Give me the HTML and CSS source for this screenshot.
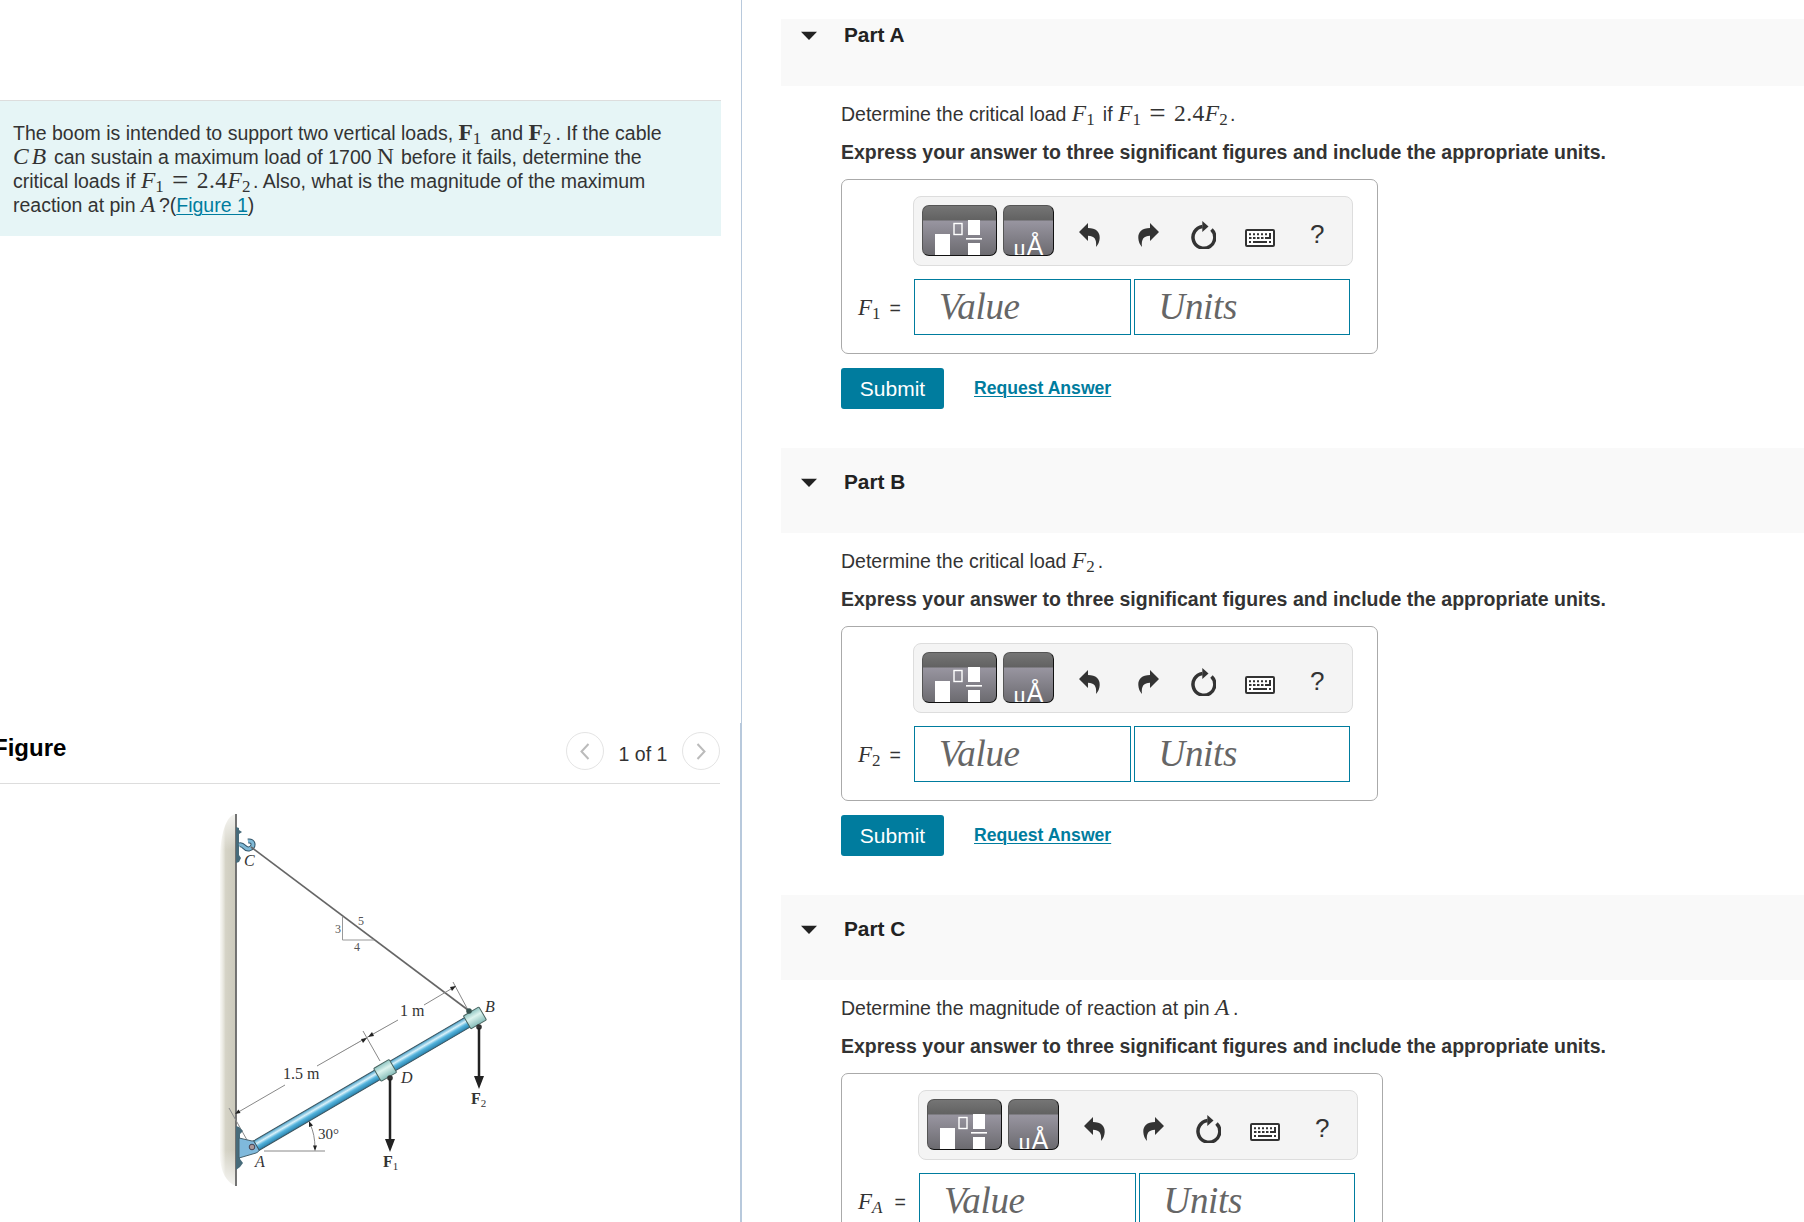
FILE: index.html
```html
<!DOCTYPE html>
<html lang="en">
<head>
    <meta charset="UTF-8">
    <meta name="viewport" content="width=device-width, initial-scale=1.0">
    <title>Boom and Cable</title>
    <link rel="stylesheet" href="styles.css">
</head>
<body>
    <!-- Shared toolbar icons -->
    <svg class="sprite" width="0" height="0">
        <symbol id="templates" viewBox="0 0 75 51">
            <rect x="13" y="29" width="15" height="22" fill="#fff"/>
            <rect x="32" y="18.5" width="8" height="11" fill="none" stroke="#fff" stroke-width="1.4"/>
            <rect x="46" y="15" width="12" height="15" fill="#fff"/>
            <rect x="44" y="33" width="16" height="1.6" fill="#fff"/>
            <rect x="46" y="38" width="12" height="13" fill="#fff"/>
        </symbol>
        <symbol id="undo" viewBox="0 0 21 24">
            <path d="M0 9L9 0V5C17 5 21 9 20.7 15C20.500 18.500 19.300 21.500 17 24C18 16 15 12.800 9 12.800V18Z" fill="#333"/>
        </symbol>
        <symbol id="reset" viewBox="0 0 26 28">
            <path d="M21.500 8.500A10.900 10.900 0 1 1 12.500 5.500" fill="none" stroke="#333" stroke-width="3.500"/>
            <path d="M12.300 0L18.500 5.500L12.300 11Z" fill="#333"/>
        </symbol>
        <symbol id="keyboard" viewBox="0 0 30 18">
            <rect x="1" y="1" width="28" height="16" rx="1" fill="#fff" stroke="#333" stroke-width="2"/>
            <path d="M4 5.200H23" stroke="#333" stroke-width="2" stroke-dasharray="2 2"/>
            <path d="M4 9H22" stroke="#333" stroke-width="2" stroke-dasharray="2.500 1.500"/>
            <path d="M25 4V9H20M4 13H6M8 13H22M24 13H26" fill="none" stroke="#333" stroke-width="2"/>
        </symbol>
    </svg>

    <div class="page">
        <div class="left">
            <div class="problem">
                <div>The boom is intended to support two vertical loads, <span class="math f-bold"><b>F</b><sub>1</sub></span>and <span class="math f-bold2"><b>F</b><sub>2</sub></span>. If the cable</div>
                <div><span class="math cb"><i>CB</i></span>can sustain a maximum load of 1700 <span class="math newton">N</span>before it fails, determine the</div>
                <div>critical loads if <span class="math eq"><i>F</i><sub>1</sub><span class="equals">=</span><span class="num">2.4</span><i>F</i><sub>2</sub></span>. Also, what is the magnitude of the maximum</div>
                <div>reaction at pin <span class="math pin"><i>A</i></span>?(<a href="#figure">Figure 1</a>)</div>
            </div>

            <div class="figure-pane" id="figure">
                <div class="figure-head">
                    <h2>Figure</h2>
                    <div class="pager">
                        <span class="circle"><svg width="10" height="17" viewBox="0 0 10 17"><path d="M8.500 1L1.500 8.500L8.500 16"/></svg></span>
                        <span class="count">1 of 1</span>
                        <span class="circle"><svg width="10" height="17" viewBox="0 0 10 17"><path d="M1.500 1L8.500 8.500L1.500 16"/></svg></span>
                    </div>
                </div>
                <svg class="diagram" width="320" height="400" viewBox="200 800 320 400">
                    <defs>
                        <linearGradient id="wall" x1="0" x2="1">
                            <stop offset="0" stop-color="#e9e8de" stop-opacity=".3"/>
                            <stop offset=".35" stop-color="#d5d3c6"/>
                            <stop offset="1" stop-color="#cbc9bb"/>
                        </linearGradient>
                        <linearGradient id="fade" x1="0" x2="0" y1="0" y2="1">
                            <stop offset="0" stop-color="#fff" stop-opacity=".8"/>
                            <stop offset=".1" stop-color="#fff" stop-opacity="0"/>
                            <stop offset=".9" stop-color="#fff" stop-opacity="0"/>
                            <stop offset="1" stop-color="#fff" stop-opacity=".8"/>
                        </linearGradient>
                        <linearGradient id="boom" x1="0" x2="0" y1="0" y2="1">
                            <stop offset="0" stop-color="#3f9cc6"/>
                            <stop offset=".35" stop-color="#d9f1fa"/>
                            <stop offset=".6" stop-color="#55b4dd"/>
                            <stop offset="1" stop-color="#277fa9"/>
                        </linearGradient>
                        <linearGradient id="collar" x1="0" x2="0" y1="0" y2="1">
                            <stop offset="0" stop-color="#8fc5c2"/>
                            <stop offset=".4" stop-color="#dcf3ee"/>
                            <stop offset="1" stop-color="#86bdb9"/>
                        </linearGradient>
                    </defs>
                    <!-- wall -->
                    <path d="M236 814C226 815 220 835 220 860V1155C220 1172 227 1183 236 1186Z" fill="url(#wall)"/>
                    <path d="M219 813H236V1187H219Z" fill="url(#fade)"/>
                    <path d="M236 814V1186" stroke="#666" stroke-width="1.800"/>
                    <!-- hook at C -->
                    <path d="M236 827L239 828V830L242 832L239 834V855L241 858L239 862L236 863Z" fill="#476b7a"/>
                    <path d="M239 845C244 843 244 850 249 849C255 847 254 840 248 841" fill="none" stroke="#34566a" stroke-width="5"/>
                    <path d="M239 845C244 843 244 850 249 849C255 847 254 840 248 841" fill="none" stroke="#7fb9d6" stroke-width="3"/>
                    <path d="M251 847L468 1010" stroke="#666" stroke-width="1.600"/>
                    <!-- slope triangle -->
                    <path d="M342.500 917V940H374" fill="none" stroke="#999"/>
                    <!-- dimensions -->
                    <g stroke="#888" stroke-width="1">
                        <path d="M235 1114L285 1085M317 1066L366 1038L398 1020M424 1005L456 986"/>
                        <path d="M363 1031L380 1061M453 982L468 1010M229 1108L247 1140"/>
                        <path d="M264 1151H325"/>
                        <path d="M310 1124Q315 1134 315 1149" fill="none"/>
                    </g>
                    <g fill="#222">
                        <path d="M235 1114L238.500 1109.500L240.500 1113Z"/>
                        <path d="M367 1038L361 1039L363 1043Z"/>
                        <path d="M368 1037L372 1032L374 1036Z"/>
                        <path d="M456 986L450 987L452 991Z"/>
                        <path d="M309 1121L309 1127L313 1125.500Z"/>
                        <path d="M315 1151L313 1145.500H317Z"/>
                    </g>
                    <!-- pin at A -->
                    <path d="M236 1126L239 1127L243 1131L240 1134V1159L243 1163L240 1167L236 1170Z" fill="#476b7a"/>
                    <path d="M239 1138L252 1141A6 6 0 0 1 256 1153L239 1158Z" fill="#7fb9dc" stroke="#45606c"/>
                    <!-- boom -->
                    <g transform="translate(255 1147) rotate(-30.300)">
                        <rect x="2" y="-6" width="249" height="11" fill="url(#boom)" stroke="#3d5661" stroke-width="1"/>
                        <rect x="142" y="-8" width="18" height="15" rx="1" fill="url(#collar)" stroke="#48635f"/>
                        <rect x="246" y="-8" width="18" height="15" rx="1" fill="url(#collar)" stroke="#48635f"/>
                    </g>
                    <circle cx="252" cy="1147" r="2.800" fill="#a99" stroke="#445"/>
                    <circle cx="469" cy="1011" r="2.800" fill="#36534f"/>
                    <circle cx="479" cy="1027" r="2.800" fill="#333"/>
                    <circle cx="390" cy="1078" r="2.800" fill="#333"/>
                    <!-- loads -->
                    <path d="M479 1028V1080M390 1079V1142" stroke="#222" stroke-width="2.500"/>
                    <path d="M479 1089L474 1076H484ZM390 1152L385 1139H395Z" fill="#222"/>
                    <g class="labels">
                        <text x="244" y="866" class="it">C</text>
                        <text x="485" y="1012" class="it">B</text>
                        <text x="401" y="1083" class="it">D</text>
                        <text x="255" y="1167" class="it">A</text>
                        <text x="335" y="933" class="small">3</text>
                        <text x="358" y="925" class="small">5</text>
                        <text x="354" y="951" class="small">4</text>
                        <text x="400" y="1016">1 m</text>
                        <text x="283" y="1079">1.5 m</text>
                        <text x="318" y="1139" class="angle">30°</text>
                        <text x="471" y="1104" class="bd">F<tspan class="low" dy="3">2</tspan></text>
                        <text x="383" y="1167" class="bd">F<tspan class="low" dy="3">1</tspan></text>
                    </g>
                </svg>
            </div>
        </div>

        <div class="right">
            <div class="part first">
                <div class="part-head"><span class="arrow"></span><h3>Part A</h3></div>
                <div class="part-body">
                    <p>Determine the critical load <span class="math f-one"><i>F</i><sub>1</sub></span>if <span class="math eq"><i>F</i><sub>1</sub><span class="equals">=</span><span class="num">2.4</span><i>F</i><sub>2</sub></span>.</p>
                    <p class="express">Express your answer to three significant figures and include the appropriate units.</p>
                    <div class="answer">
                        <div class="label"><span class="math"><i>F</i><sub>1</sub></span><span>=</span></div>
                        <div class="entry">
                            <div class="toolbar">
                                <span class="tool wide"><svg width="75" height="51"><use href="#templates"/></svg></span>
                                <span class="tool units">μ<span>Å</span></span>
                                <svg class="undo" width="21" height="24"><use href="#undo"/></svg>
                                <svg class="redo" width="21" height="24"><use href="#undo"/></svg>
                                <svg class="reset" width="26" height="28"><use href="#reset"/></svg>
                                <svg class="keyboard" width="30" height="18"><use href="#keyboard"/></svg>
                                <span class="help">?</span>
                            </div>
                            <div class="fields"><div class="field">Value</div><div class="field">Units</div></div>
                        </div>
                    </div>
                    <div class="actions"><button>Submit</button><a href="#">Request Answer</a></div>
                </div>
            </div>

            <div class="part">
                <div class="part-head"><span class="arrow"></span><h3>Part B</h3></div>
                <div class="part-body">
                    <p>Determine the critical load <span class="math f-end"><i>F</i><sub>2</sub></span>.</p>
                    <p class="express">Express your answer to three significant figures and include the appropriate units.</p>
                    <div class="answer">
                        <div class="label"><span class="math"><i>F</i><sub>2</sub></span><span>=</span></div>
                        <div class="entry">
                            <div class="toolbar">
                                <span class="tool wide"><svg width="75" height="51"><use href="#templates"/></svg></span>
                                <span class="tool units">μ<span>Å</span></span>
                                <svg class="undo" width="21" height="24"><use href="#undo"/></svg>
                                <svg class="redo" width="21" height="24"><use href="#undo"/></svg>
                                <svg class="reset" width="26" height="28"><use href="#reset"/></svg>
                                <svg class="keyboard" width="30" height="18"><use href="#keyboard"/></svg>
                                <span class="help">?</span>
                            </div>
                            <div class="fields"><div class="field">Value</div><div class="field">Units</div></div>
                        </div>
                    </div>
                    <div class="actions"><button>Submit</button><a href="#">Request Answer</a></div>
                </div>
            </div>

            <div class="part">
                <div class="part-head"><span class="arrow"></span><h3>Part C</h3></div>
                <div class="part-body">
                    <p>Determine the magnitude of reaction at pin <span class="math pin"><i>A</i></span>.</p>
                    <p class="express">Express your answer to three significant figures and include the appropriate units.</p>
                    <div class="answer">
                        <div class="label long"><span class="math"><i>F</i><sub><i>A</i></sub></span><span>=</span></div>
                        <div class="entry">
                            <div class="toolbar">
                                <span class="tool wide"><svg width="75" height="51"><use href="#templates"/></svg></span>
                                <span class="tool units">μ<span>Å</span></span>
                                <svg class="undo" width="21" height="24"><use href="#undo"/></svg>
                                <svg class="redo" width="21" height="24"><use href="#undo"/></svg>
                                <svg class="reset" width="26" height="28"><use href="#reset"/></svg>
                                <svg class="keyboard" width="30" height="18"><use href="#keyboard"/></svg>
                                <span class="help">?</span>
                            </div>
                            <div class="fields"><div class="field">Value</div><div class="field">Units</div></div>
                        </div>
                    </div>
                </div>
            </div>
        </div>
    </div>
</body>
</html>
```
FILE: styles.css
```css
* {
    box-sizing: border-box;
}
body {
    margin: 0;
    height: 1222px;
    overflow: hidden;
    background: #fff;
    color: #333;
    font-family: "Liberation Sans", Arial, sans-serif;
    font-size: 19.5px;
    line-height: 24px;
}
h2, h3, p {
    margin: 0;
}
a {
    color: #007c9e;
    text-decoration-thickness: 1px;
    text-underline-offset: 2px;
}
.sprite {
    display: block;
}
.page {
    display: flex;
    height: 1222px;
    overflow: hidden;
}

/* left column */
.left {
    width: 742px;
    flex: none;
    padding-top: 100px;
    border-right: 1px solid #b8c9dc;
    display: flex;
    flex-direction: column;
}
.problem {
    width: 721px;
    height: 136px;
    padding: 19px 0 0 13px;
    background: #e6f5f6;
    border-top: 1px solid #ddd;
    white-space: nowrap;
}
.problem div {
    height: 24px;
}
.figure-pane {
    margin-top: 487px;
    flex: 1;
    border-right: 1px solid #b8c9dc;
}
.figure-head {
    width: 720px;
    height: 61px;
    border-bottom: 1px solid #ddd;
    display: flex;
    justify-content: space-between;
    padding-top: 9px;
}
.figure-head h2 {
    margin: 4px 0 0 -7px;
    font-size: 24px;
    color: #000;
}
.pager {
    display: flex;
}
.circle {
    width: 38px;
    height: 38px;
    border: 1px solid #e4e4e4;
    border-radius: 50%;
    display: flex;
    align-items: center;
    justify-content: center;
}
.circle path {
    fill: none;
    stroke: #bbb;
    stroke-width: 2;
}
.count {
    width: 78px;
    padding-top: 10px;
    text-align: center;
}
.diagram {
    display: block;
    margin: 16px 0 0 200px;
}
.labels text {
    font-family: "Liberation Serif", serif;
    font-size: 16px;
    fill: #333;
}
.labels .it {
    font-style: italic;
}
.labels .bd {
    font-weight: bold;
}
.labels .angle {
    font-size: 15px;
}
.labels .small {
    font-size: 12px;
    fill: #555;
}
.labels .low {
    font-size: 11px;
    font-weight: normal;
}

/* formulas */
.math {
    display: inline-block;
    height: 24px;
    font-family: "Liberation Serif", "Times New Roman", serif;
    font-size: 23.5px;
    white-space: nowrap;
}
.math sub {
    font-size: 17px;
    line-height: 0;
    vertical-align: -4px;
}
.f-bold {
    width: 32px;
}
.f-bold2 {
    width: 27px;
}
.cb {
    width: 41px;
    letter-spacing: 3px;
}
.newton {
    width: 24px;
}
.eq {
    width: 112px;
}
.equals {
    display: inline-block;
    width: 33px;
    text-align: center;
    font-size: 29px;
    line-height: 0;
    vertical-align: -2px;
}
.num {
    letter-spacing: 0.5px;
}
.pin {
    width: 18px;
}
.f-one {
    width: 31px;
}
.f-end {
    width: 26px;
}

/* right column */
.right {
    flex: none;
    width: 1062px;
    padding: 1px 0 0 39px;
}
.part {
    height: 447px;
}
.part-head {
    height: 85px;
    padding: 22px 0 0 26px;
    background: #f9f9f9;
    display: flex;
    color: #222;
}
.first {
    height: 429px;
    margin-top: 18px;
}
.first .part-head {
    height: 67px;
    padding-top: 4px;
}
.arrow {
    width: 16px;
    height: 9px;
    margin: 8px 20px 0 -6px;
    background: #222;
    clip-path: polygon(0 8%, 100% 8%, 50% 100%);
}
.part-head h3 {
    margin: 0 0 0 7px;
    font-size: 20.8px;
}
.part-body {
    padding: 15px 0 0 60px;
    white-space: nowrap;
}
.part-body p {
    height: 24px;
}
.part-body .express {
    margin-top: 15px;
    font-weight: bold;
}
.answer {
    width: 537px;
    height: 175px;
    margin-top: 15px;
    border: 1px solid #aaa;
    border-radius: 7px;
    display: flex;
}
.label {
    width: 71px;
    flex: none;
    display: flex;
    justify-content: space-between;
    padding: 116px 12px 0 16px;
}
.label .math {
    font-size: 23px;
}
.label.long {
    width: 76px;
}
.answer:has(.long) {
    width: 542px;
}
.entry {
    padding-top: 16px;
}
.toolbar {
    width: 440px;
    height: 70px;
    padding: 8px;
    background: #f4f4f4;
    border: 1px solid #ddd;
    border-radius: 8px;
    display: flex;
}
.tool {
    height: 51px;
    margin-right: 6px;
    border: 1px solid #111;
    border-top-color: #555;
    border-left-color: #555;
    border-radius: 7px;
    background: linear-gradient(#757575, #626262 14px, #9895a0 15px, #6c6b70);
    overflow: hidden;
    flex: none;
}
.wide {
    width: 75px;
}
.wide svg {
    display: block;
    margin: -1px;
}
.units {
    width: 51px;
    color: #fff;
    font-family: "Liberation Serif", serif;
    font-size: 25px;
    padding: 26px 0 0 9px;
    line-height: 32px;
    white-space: nowrap;
}
.units span {
    font-family: "Open Sans", sans-serif;
    font-size: 27px;
    line-height: 0;
}
.undo {
    margin: 18px 0 0 19px;
}
.redo {
    margin: 18px 0 0 38px;
    transform: scaleX(-1);
}
.reset {
    margin: 16px 0 0 31px;
}
.keyboard {
    margin: 24px 0 0 29px;
}
.help {
    margin: 13px 0 0 35px;
    font-size: 26px;
    line-height: 32px;
}
.fields {
    display: flex;
    gap: 3px;
    padding: 13px 0 0 1px;
}
.field {
    width: 216.5px;
    height: 56px;
    padding-left: 24px;
    border: 1px solid #007c9e;
    color: #666;
    font-family: "Liberation Serif", serif;
    font-style: italic;
    font-size: 37px;
    letter-spacing: -0.3px;
    line-height: 54px;
}
.actions {
    display: flex;
    margin-top: 14px;
}
.actions button {
    width: 103px;
    height: 41px;
    padding: 0;
    border: none;
    border-radius: 3px;
    background: #007c9e;
    color: #fff;
    font-family: inherit;
    font-size: 21px;
}
.actions a {
    margin: 8px 0 0 30px;
    font-size: 17.6px;
    font-weight: bold;
}
```
